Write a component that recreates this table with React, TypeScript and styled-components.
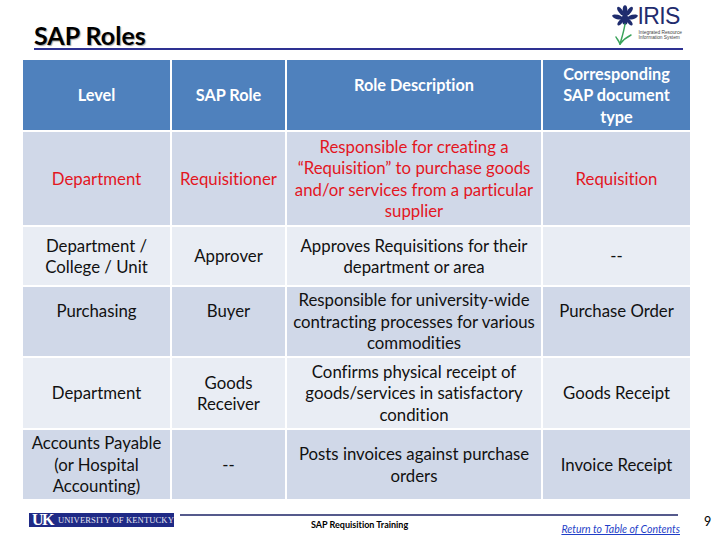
import React from "react";
import styled, { createGlobalStyle } from "styled-components";

const GlobalStyle = createGlobalStyle`
  html, body {
    margin: 0;
    padding: 0;
    background: #ffffff;
  }
  body {
    font-family: Lato, "Open Sans", "Liberation Sans", sans-serif;
    font-variant-ligatures: none;
  }
`;

const colors = {
  header: "#4f81bd",
  dark: "#d0d8e8",
  light: "#e9edf4",
  red: "#e3161f",
  navy: "#1f2c6e",
  rule: "#2e3192",
};

const Page = styled.div`
  width: 720px;
  height: 540px;
  position: relative;
  overflow: hidden;
  background: #ffffff;
  display: flex;
  flex-direction: column;
`;

const Header = styled.div`
  margin-left: 34px;
  width: 649px;
  height: 48px;
  border-bottom: 2px solid ${colors.rule};
  display: flex;
  justify-content: space-between;
  align-items: flex-end;
`;

const Title = styled.h1`
  margin: 0 0 -1px 0;
  font-size: 25px;
  font-weight: 700;
  line-height: 28px;
  color: #000000;
  text-shadow: 1px 1px 1px rgba(0, 0, 0, 0.35);
`;

const Logo = styled.div`
  display: flex;
  align-items: flex-start;
  align-self: flex-start;
  margin-top: 5px;
  margin-right: 1px;
`;

const LogoWords = styled.div`
  display: flex;
  flex-direction: column;
  padding-top: 2px;
`;

const LogoTitle = styled.span`
  font-family: "Liberation Sans", Arial, sans-serif;
  font-size: 23px;
  line-height: 19px;
  color: ${colors.navy};
  letter-spacing: -0.6px;
  margin-bottom: 4px;
`;

const LogoSub = styled.span`
  font-family: "Liberation Sans", Arial, sans-serif;
  font-size: 4.8px;
  line-height: 5px;
  color: #444444;
  white-space: nowrap;
  margin-left: 1px;
`;

const Table = styled.div`
  margin: 10px 0 0 23px;
  width: 667px;
  display: grid;
  grid-template-columns: 147px 113px 254px 147px;
  grid-template-rows: 70px 93px 58px 69px 70px 69px;
  gap: 2px;
  background: #ffffff;
`;

const Cell = styled.div<{ $tone: "header" | "dark" | "light"; $red?: boolean }>`
  background: ${(p) => colors[p.$tone]};
  color: ${(p) => (p.$tone === "header" ? "#ffffff" : p.$red ? colors.red : "#111111")};
  font-weight: ${(p) => (p.$tone === "header" ? 700 : 400)};
  font-size: ${(p) => (p.$tone === "header" ? "16.3px" : "16.8px")};
  line-height: 21.5px;
  display: flex;
  flex-direction: column;
  justify-content: center;
  align-items: center;
  text-align: center;
`;

const Line = styled.span`
  display: block;
  white-space: nowrap;
`;

const Footer = styled.div`
  margin-top: 14px;
  display: flex;
  align-items: flex-start;
  padding-left: 29px;
`;

const UKBadge = styled.div`
  width: 145px;
  height: 14px;
  background: #1f2a86;
  display: flex;
  align-items: center;
  font-family: "Liberation Serif", "Times New Roman", serif;
  color: #ffffff;
`;

const UKMark = styled.span`
  font-weight: 700;
  font-size: 16px;
  line-height: 14px;
  letter-spacing: -1.5px;
  margin-left: 3px;
  margin-right: 5px;
`;

const UKName = styled.span`
  font-size: 8.6px;
  line-height: 14px;
  letter-spacing: 0.1px;
  color: #e6e6f0;
  white-space: nowrap;
`;

const FooterMain = styled.div`
  margin-left: 6px;
  margin-top: 1px;
  width: 498px;
  border-top: 2px solid #555a8c;
  display: flex;
  align-items: flex-start;
`;

const FooterTitle = styled.span`
  margin-left: 131px;
  margin-top: 3px;
  font-size: 9px;
  font-weight: 700;
  color: #000000;
  white-space: nowrap;
`;

const TocLink = styled.a`
  margin-left: auto;
  margin-right: -2px;
  margin-top: 7px;
  font-size: 10.5px;
  font-style: italic;
  color: #1f3fc8;
  text-decoration: underline;
  white-space: nowrap;
`;

const PageNumber = styled.span`
  margin-left: 26px;
  margin-top: 1px;
  font-size: 12.5px;
  color: #000000;
`;

type Tone = "header" | "dark" | "light";

const columns: string[][] = [
  ["Level"],
  ["SAP Role"],
  ["Role Description", "\u00a0"],
  ["Corresponding", "SAP document", "type"],
];

const rows: { tone: Tone; red?: boolean; cells: string[][] }[] = [
  {
    tone: "dark",
    red: true,
    cells: [
      ["Department"],
      ["Requisitioner"],
      [
        "Responsible for creating a",
        "\u201cRequisition\u201d to purchase goods",
        "and/or services from a particular",
        "supplier",
      ],
      ["Requisition"],
    ],
  },
  {
    tone: "light",
    cells: [
      ["Department /", "College / Unit"],
      ["Approver"],
      ["Approves Requisitions for their", "department or area"],
      ["--"],
    ],
  },
  {
    tone: "dark",
    cells: [
      ["Purchasing", "\u00a0"],
      ["Buyer", "\u00a0"],
      ["Responsible for university-wide", "contracting processes for various", "commodities"],
      ["Purchase Order", "\u00a0"],
    ],
  },
  {
    tone: "light",
    cells: [
      ["Department"],
      ["Goods", "Receiver"],
      ["Confirms physical receipt of", "goods/services in satisfactory", "condition"],
      ["Goods Receipt"],
    ],
  },
  {
    tone: "dark",
    cells: [
      ["Accounts Payable", "(or Hospital", "Accounting)"],
      ["--"],
      ["Posts invoices against purchase", "orders"],
      ["Invoice Receipt"],
    ],
  },
];

function IrisFlower() {
  return (
    <svg width="26" height="40" viewBox="0 0 26 40">
      <g fill={colors.navy}>
        <ellipse cx="13" cy="5" rx="2.3" ry="4.8" />
        <ellipse cx="8.5" cy="6" rx="2" ry="5" transform="rotate(-35 8.5 6)" />
        <ellipse cx="17.5" cy="6" rx="2" ry="5" transform="rotate(35 17.5 6)" />
        <ellipse cx="5.5" cy="12" rx="5.5" ry="2.2" transform="rotate(15 5.5 12)" />
        <ellipse cx="20.5" cy="12" rx="5.5" ry="2.2" transform="rotate(-15 20.5 12)" />
        <ellipse cx="8.5" cy="17" rx="1.8" ry="4.2" transform="rotate(40 8.5 17)" />
        <ellipse cx="17.5" cy="17" rx="1.8" ry="4.2" transform="rotate(-40 17.5 17)" />
        <ellipse cx="13" cy="14" rx="3.2" ry="6" />
      </g>
      <g fill="none" stroke="#3aa35a" strokeWidth="1.5" strokeLinecap="round">
        <path d="M13 19 C12 26 10 32 8 39" />
        <path d="M8 39 C11 35 15 32 19 30" />
        <path d="M8 39 C7 36 5 34 4 32" />
      </g>
    </svg>
  );
}

export default function App() {
  return (
    <Page>
      <GlobalStyle />
      <Header>
        <Title>SAP Roles</Title>
        <Logo>
          <IrisFlower />
          <LogoWords>
            <LogoTitle>IRIS</LogoTitle>
            <LogoSub>Integrated Resource</LogoSub>
            <LogoSub>Information System</LogoSub>
          </LogoWords>
        </Logo>
      </Header>

      <Table>
        {columns.map((lines, i) => (
          <Cell key={`h${i}`} $tone="header">
            {lines.map((l, j) => (
              <Line key={j}>{l}</Line>
            ))}
          </Cell>
        ))}
        {rows.map((row, r) =>
          row.cells.map((lines, c) => (
            <Cell key={`${r}-${c}`} $tone={row.tone} $red={row.red}>
              {lines.map((l, j) => (
                <Line key={j}>{l}</Line>
              ))}
            </Cell>
          ))
        )}
      </Table>

      <Footer>
        <UKBadge>
          <UKMark>UK</UKMark>
          <UKName>UNIVERSITY OF KENTUCKY</UKName>
        </UKBadge>
        <FooterMain>
          <FooterTitle>SAP Requisition Training</FooterTitle>
          <TocLink href="#">Return to Table of Contents</TocLink>
        </FooterMain>
        <PageNumber>9</PageNumber>
      </Footer>
    </Page>
  );
}
